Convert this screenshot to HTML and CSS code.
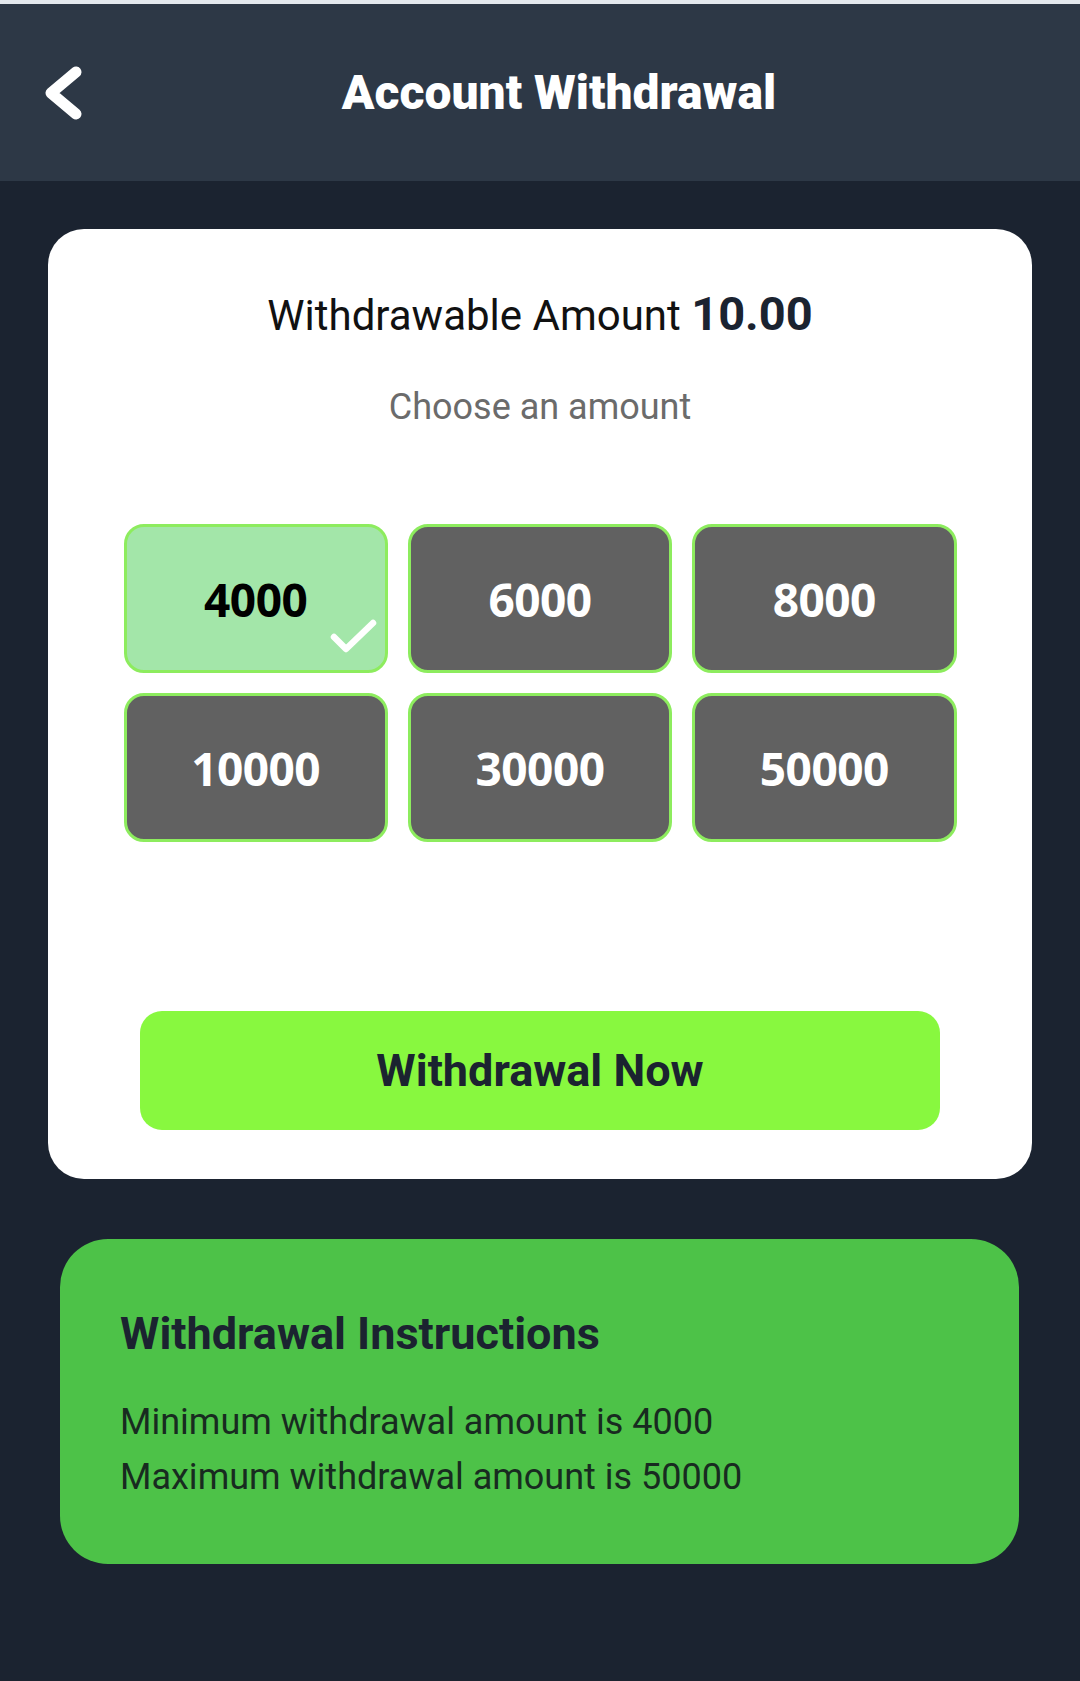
FILE: index.html
```html
<!DOCTYPE html>
<html lang="en">
<head>
<meta charset="utf-8">
<title>Account Withdrawal</title>
<link rel="stylesheet" href="styles.css">
</head>
<body>
<div class="topline"></div>
<header class="header">
  <div class="back">
    <svg width="40" height="56" viewBox="0 0 40 56" aria-hidden="true">
      <polyline points="33,7 8,28 33,49" fill="none" stroke="#ffffff" stroke-width="11" stroke-linecap="round" stroke-linejoin="round"/>
    </svg>
  </div>
  <h1 class="title">Account Withdrawal</h1>
</header>
<main class="main">
  <section class="card">
    <p class="balance">Withdrawable Amount <span class="balance-value">10.00</span></p>
    <p class="choose">Choose an amount</p>
    <div class="amounts">
      <div class="amount selected">4000
        <svg class="check" width="50" height="40" viewBox="0 0 50 40" aria-hidden="true">
          <polyline points="5,19 17,31 44,5" fill="none" stroke="#ffffff" stroke-width="6.5" stroke-linecap="round" stroke-linejoin="round"/>
        </svg>
      </div>
      <div class="amount">6000</div>
      <div class="amount">8000</div>
      <div class="amount">10000</div>
      <div class="amount">30000</div>
      <div class="amount">50000</div>
    </div>
    <button class="action">Withdrawal Now</button>
  </section>
  <section class="info">
    <h2 class="info-title">Withdrawal Instructions</h2>
    <p class="info-line">Minimum withdrawal amount is 4000</p>
    <p class="info-line">Maximum withdrawal amount is 50000</p>
  </section>
</main>
</body>
</html>
```

FILE: styles.css
```css
* {
  box-sizing: border-box;
}

html, body {
  margin: 0;
  padding: 0;
}

body {
  background: #1b2330;
  min-height: 1681px;
  font-family: Roboto, "Noto Sans", sans-serif;
}

.topline {
  height: 4px;
  background: #e3e8ed;
}

.header {
  height: 177px;
  background: #2d3846;
  display: flex;
  align-items: center;
  padding: 0 45px 0 43px;
}

.back {
  width: 40px;
  height: 56px;
  display: flex;
}

.title {
  flex: 1;
  margin: 0;
  text-align: center;
  color: #ffffff;
  font-family: Roboto, sans-serif;
  font-weight: 900;
  font-size: 48px;
  line-height: 56px;
}

.main {
  padding: 48px 0 0;
}

.card {
  margin: 0 48px;
  background: #ffffff;
  border-radius: 36px;
  padding: 57px 0 49px;
  display: flex;
  flex-direction: column;
  align-items: center;
}

.balance {
  margin: 0;
  font-size: 42px;
  line-height: 56px;
  color: #111111;
  text-align: center;
}

.balance-value {
  font-size: 47px;
  font-weight: 700;
  color: #1b2330;
  line-height: 56px;
}

.choose {
  margin: 41px 0 0;
  font-size: 36px;
  line-height: 44px;
  color: #6b6b6b;
  text-align: center;
}

.amounts {
  margin-top: 95px;
  width: 833px;
  display: grid;
  grid-template-columns: repeat(3, 1fr);
  column-gap: 20px;
  row-gap: 20px;
}

.amount {
  position: relative;
  height: 149px;
  border: 3px solid #8dec5e;
  border-radius: 20px;
  background: #616161;
  color: #ffffff;
  display: flex;
  align-items: center;
  justify-content: center;
  padding-top: 0;
  font-family: "Open Sans", "Noto Sans", sans-serif;
  font-weight: 700;
  font-size: 46px;
  letter-spacing: -0.5px;
}

.amount.selected {
  background: #a3e6a9;
  color: #000000;
}

.check {
  position: absolute;
  right: 6px;
  bottom: 12px;
}

.action {
  margin-top: 169px;
  width: 800px;
  height: 119px;
  border: none;
  border-radius: 22px;
  background: #88f83f;
  color: #1b2330;
  font-family: Roboto, sans-serif;
  font-weight: 700;
  font-size: 45px;
  cursor: pointer;
}

.info {
  margin: 60px 61px 0 60px;
  background: #4dc248;
  border-radius: 48px;
  padding: 69px 40px 59px 60px;
}

.info-title {
  margin: 0;
  font-size: 45px;
  line-height: 52px;
  font-weight: 700;
  color: #1b2330;
}

.info-line {
  margin: 0;
  font-size: 36px;
  line-height: 55px;
  color: #182b20;
}

.info-title + .info-line {
  margin-top: 35px;
}
```
